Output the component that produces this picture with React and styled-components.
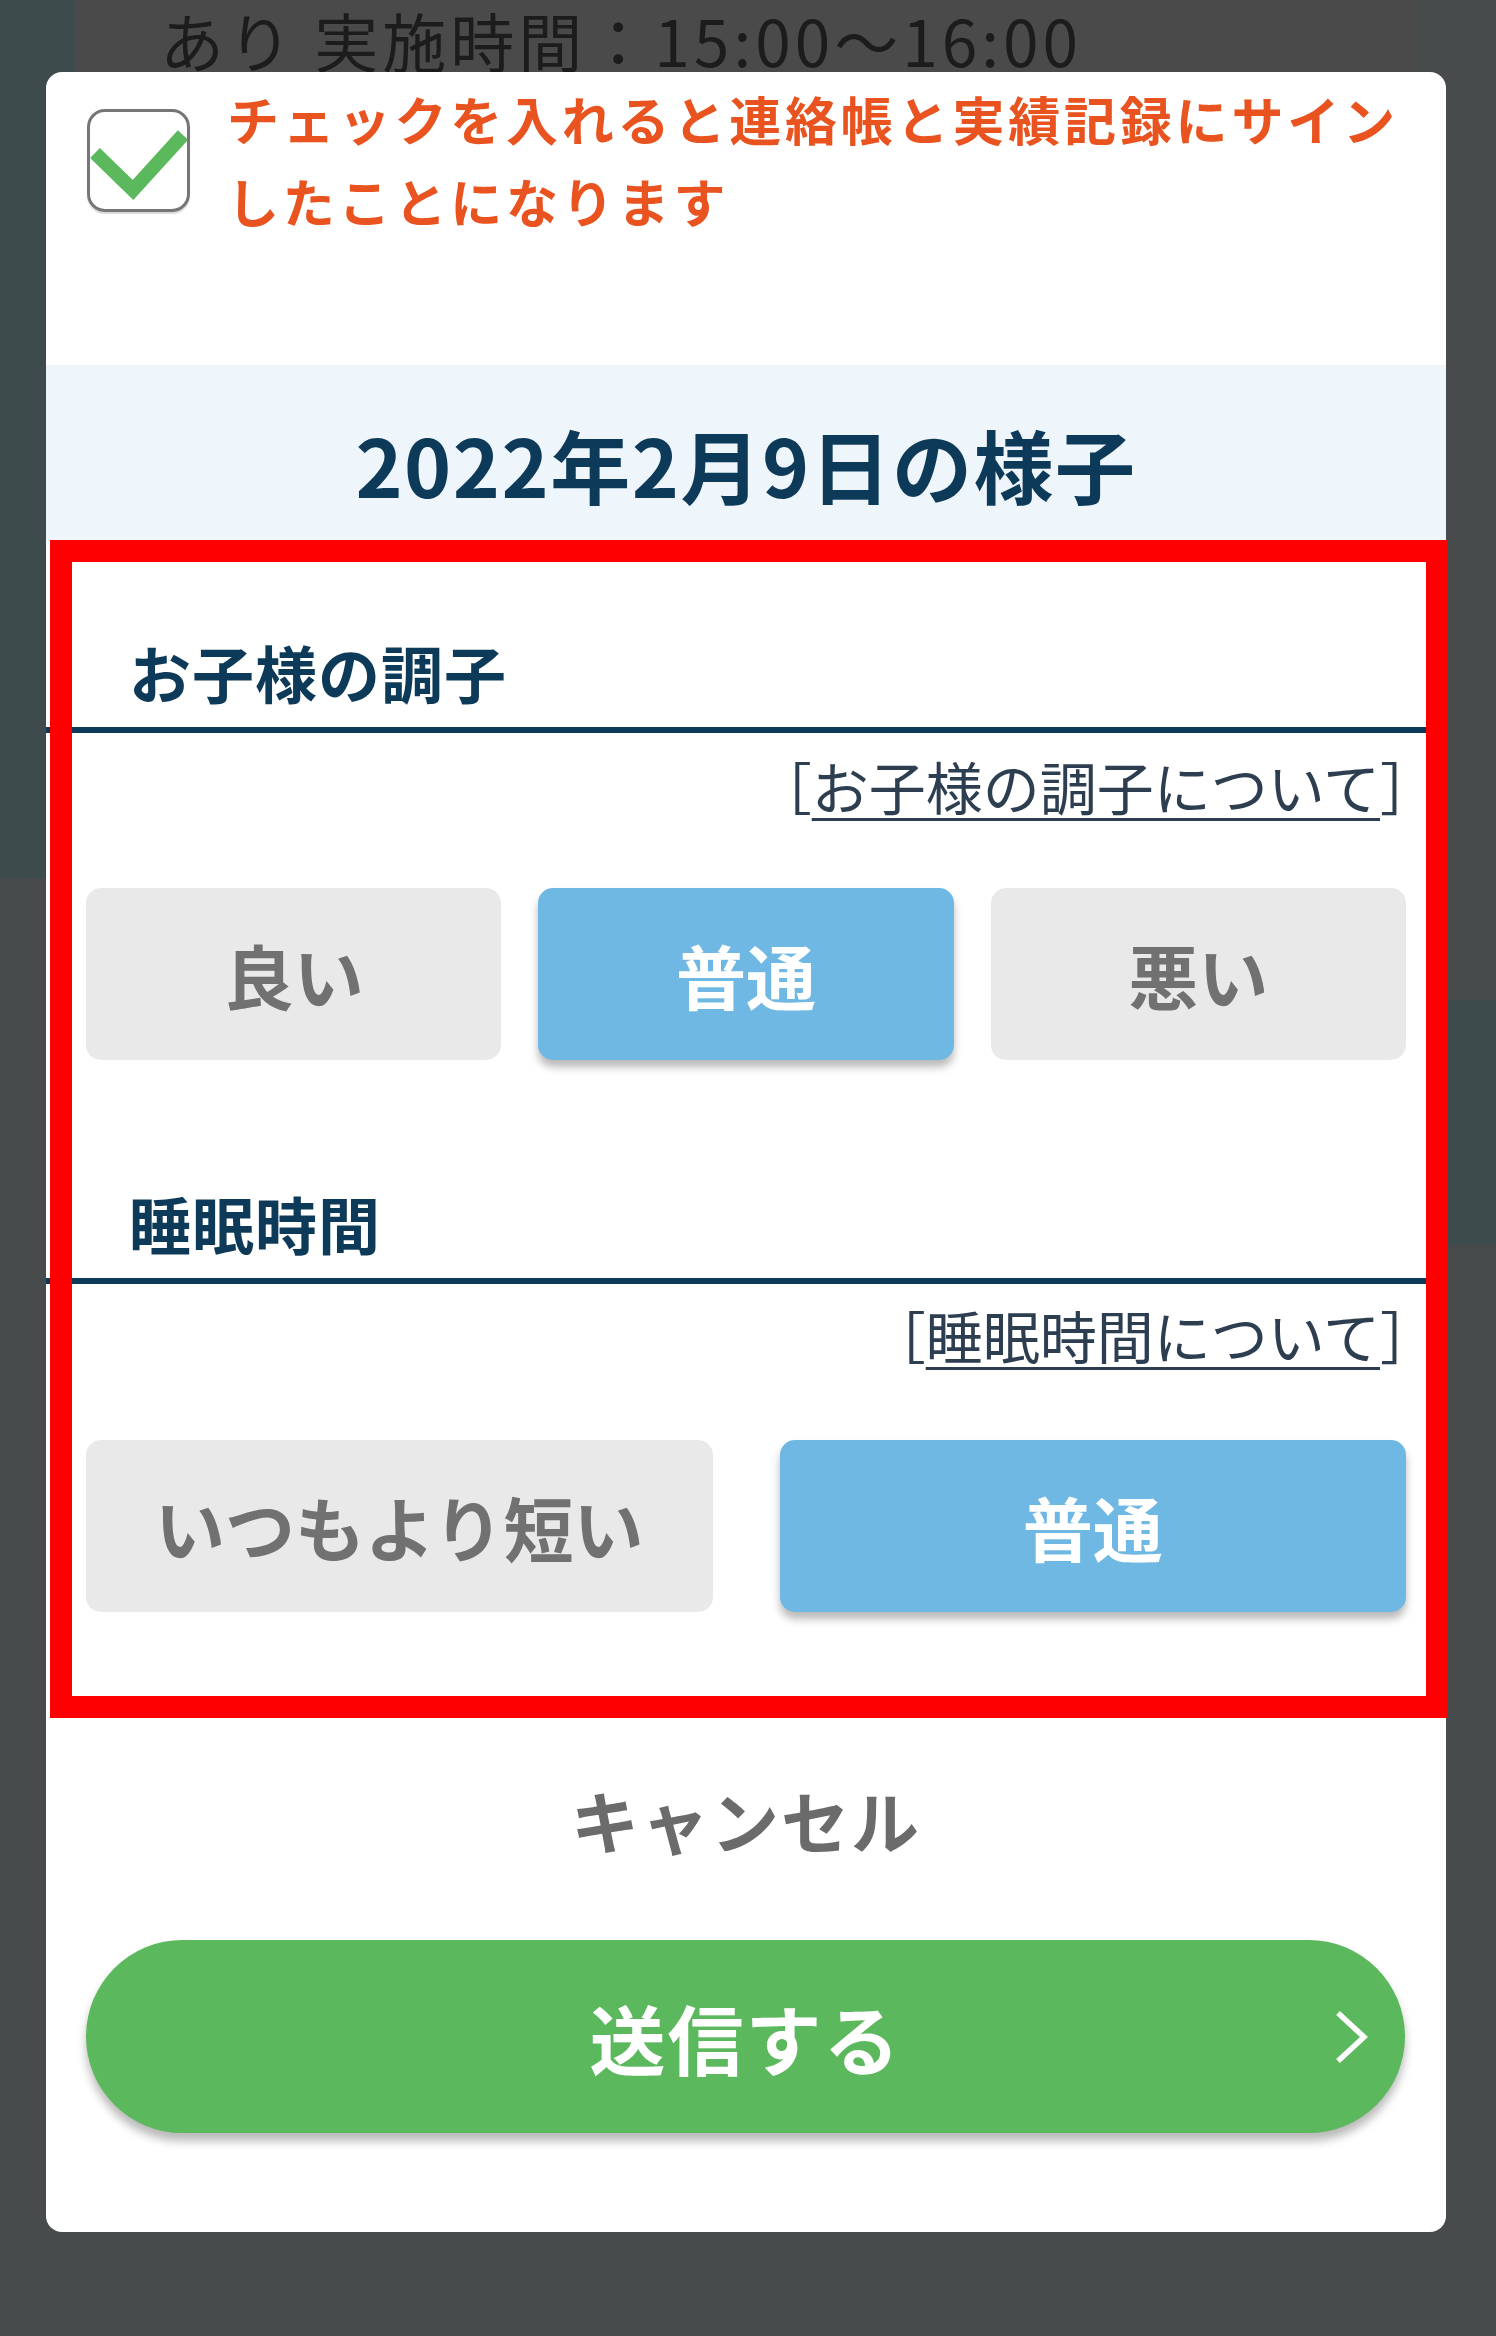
import React from "react";
import styled, { createGlobalStyle } from "styled-components";

const GlobalStyle = createGlobalStyle`
  html, body {
    margin: 0;
    padding: 0;
    background: #474b4c;
  }
  body {
    font-family: "Noto Sans CJK JP", "Noto Sans", sans-serif;
  }
  * { box-sizing: border-box; }
`;

const Page = styled.div`
  width: 1496px;
  min-height: 2336px;
  background:
    linear-gradient(#3d4b4d, #3d4b4d) 0 0 / 75px 878px no-repeat,
    linear-gradient(#3d4b4d, #3d4b4d) 100% 1000px / 50px 245px no-repeat,
    #474b4c;
  overflow: hidden;
`;

const BackCard = styled.div`
  margin-left: 75px;
  width: 1343px;
  height: 72px;
  background: #4a4a4a;
  overflow: hidden;
  padding-left: 85px;
  font-size: 64px;
  letter-spacing: 4px;
  line-height: 78px;
  color: #1c1c1c;
  white-space: nowrap;
`;

const Modal = styled.div`
  margin-left: 46px;
  width: 1400px;
  background: #ffffff;
  border-radius: 16px;
  padding-bottom: 99px;
`;

const Header = styled.div`
  height: 293px;
  padding: 6px 40px 0 41px;
`;

const CheckRow = styled.div`
  display: flex;
  align-items: center;
  gap: 37px;
`;

const CheckBox = styled.div`
  flex: 0 0 103px;
  width: 103px;
  height: 103px;
  border: 3px solid #767676;
  border-radius: 18px;
  box-shadow: 0 2px 1px rgba(0, 0, 0, 0.15);
  display: flex;
  svg { display: block; }
`;

const Notice = styled.p`
  margin: 0;
  color: #e9531f;
  font-weight: 700;
  font-size: 52px;
  letter-spacing: 3.8px;
  line-height: 82px;
  white-space: nowrap;
`;

const DateBand = styled.div`
  height: 175px;
  padding-top: 20px;
  background: #eef6fc;
  display: flex;
  align-items: center;
  justify-content: center;
`;

const DateTitle = styled.h2`
  margin: 0;
  font-size: 80px;
  letter-spacing: 1.5px;
  line-height: 1.2;
  font-weight: 700;
  color: #0e3a5a;
`;

const Section = styled.div`
  position: relative;
  padding: 93px 40px 106px;
`;

const RedFrame = styled.div`
  position: absolute;
  top: 0;
  bottom: 0;
  left: 4px;
  right: -2px;
  border: 22px solid #ff0000;
  pointer-events: none;
`;

const SectionHeading = styled.h3`
  margin: ${(p) => p.$gap || 0}px -40px 0;
  padding: 0 0 16px 83px;
  border-bottom: 6px solid #0e3a5a;
  font-size: 62px;
  line-height: 78px;
  letter-spacing: 1px;
  font-weight: 700;
  color: #0e3a5a;
`;

const InfoLine = styled.div`
  margin: ${(p) => p.$gap}px -31px 0 0;
  text-align: right;
  font-size: 57px;
  line-height: 70px;
  color: #2d3e50;
  a {
    color: inherit;
    text-decoration: underline;
    text-decoration-thickness: 3px;
    text-underline-offset: 8px;
  }
`;

const Choices = styled.div`
  display: grid;
  grid-template-columns: repeat(${(p) => p.$cols}, 1fr);
  column-gap: ${(p) => p.$colGap}px;
  margin-top: ${(p) => p.$gap}px;
`;

const Choice = styled.div`
  height: 172px;
  border-radius: 15px;
  display: flex;
  align-items: center;
  justify-content: center;
  font-size: 70px;
  font-weight: 700;
  background: ${(p) => (p.$active ? "#6fb8e3" : "#e9e9e9")};
  color: ${(p) => (p.$active ? "#ffffff" : "#717171")};
  box-shadow: ${(p) => (p.$active ? "0 7px 8px rgba(0,0,0,0.28)" : "none")};
`;

const Cancel = styled.div`
  margin-top: 56px;
  text-align: center;
  font-size: 68px;
  line-height: 92px;
  letter-spacing: 2px;
  font-weight: 700;
  color: #6b6b6b;
`;

const SendButton = styled.div`
  position: relative;
  margin: 74px 41px 0 40px;
  height: 193px;
  border-radius: 97px;
  background: #5cb85c;
  box-shadow: 0 8px 10px rgba(0, 0, 0, 0.28);
  display: flex;
  align-items: center;
  justify-content: center;
  color: #ffffff;
  font-size: 76px;
  font-weight: 700;
  letter-spacing: 2px;
`;

const Chevron = styled.svg`
  position: absolute;
  right: 37px;
  top: 50%;
  transform: translateY(-50%);
`;

export default function App() {
  return (
    <>
      <GlobalStyle />
      <Page>
        <BackCard>あり 実施時間：15:00〜16:00</BackCard>
        <Modal>
          <Header>
            <CheckRow>
              <CheckBox>
                <svg width="97" height="97" viewBox="0 0 97 97">
                  <polyline
                    points="5,41 43,78 93,23"
                    fill="none"
                    stroke="#5cb85c"
                    strokeWidth="14"
                  />
                </svg>
              </CheckBox>
              <Notice>
                チェックを入れると連絡帳と実績記録にサイン
                <br />
                したことになります
              </Notice>
            </CheckRow>
          </Header>
          <DateBand>
            <DateTitle>2022年2月9日の様子</DateTitle>
          </DateBand>
          <Section>
            <SectionHeading>お子様の調子</SectionHeading>
            <InfoLine $gap={17}>
              ［<a href="#">お子様の調子について</a>］
            </InfoLine>
            <Choices $cols={3} $colGap={37} $gap={68}>
              <Choice>良い</Choice>
              <Choice $active>普通</Choice>
              <Choice>悪い</Choice>
            </Choices>
            <SectionHeading $gap={124}>睡眠時間</SectionHeading>
            <InfoLine $gap={15}>
              ［<a href="#">睡眠時間について</a>］
            </InfoLine>
            <Choices $cols={2} $colGap={67} $gap={71}>
              <Choice>いつもより短い</Choice>
              <Choice $active>普通</Choice>
            </Choices>
            <RedFrame />
          </Section>
          <Cancel>キャンセル</Cancel>
          <SendButton>
            送信する
            <Chevron width="34" height="54" viewBox="0 0 34 54">
              <polyline
                points="4,3 30,27 4,51"
                fill="none"
                stroke="#ffffff"
                strokeWidth="5.5"
              />
            </Chevron>
          </SendButton>
        </Modal>
      </Page>
    </>
  );
}
